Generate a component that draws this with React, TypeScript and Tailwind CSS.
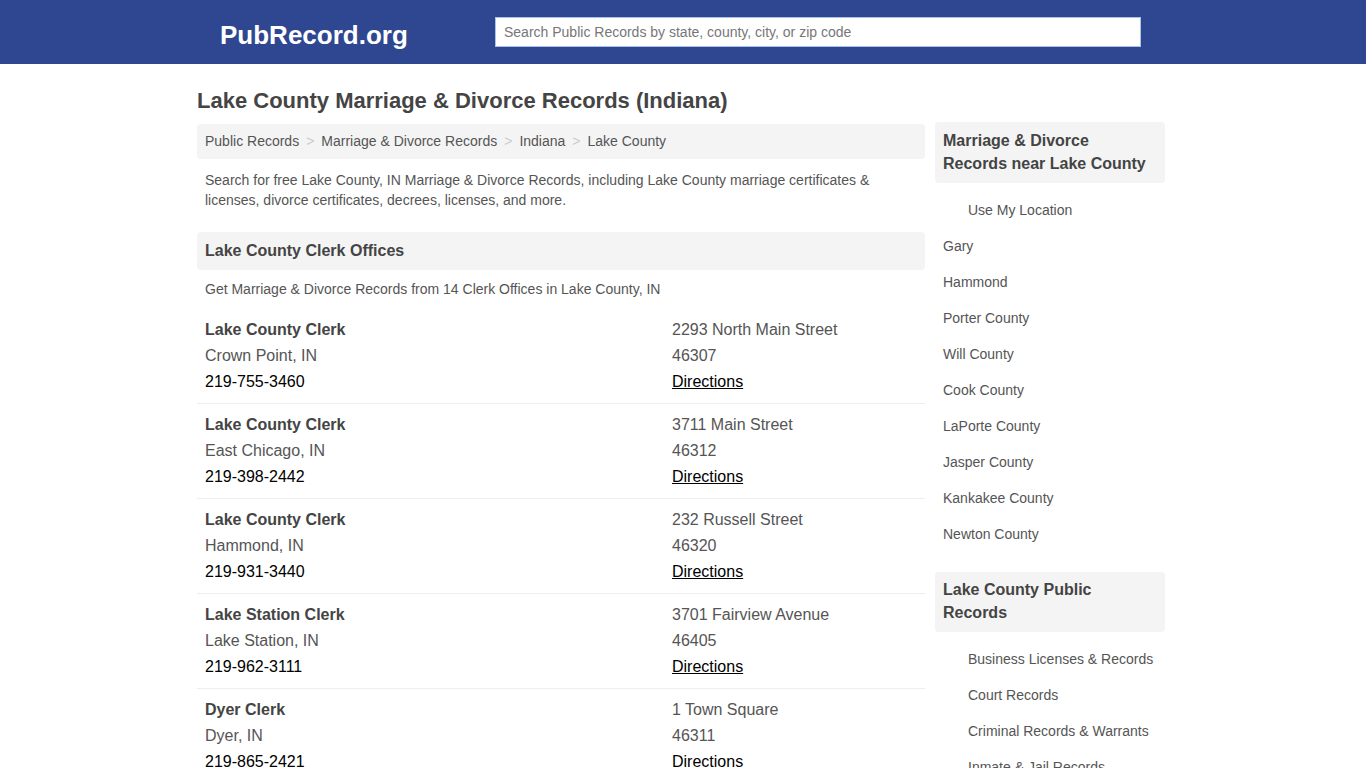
import React from "react";

const offices = [
  { name: "Lake County Clerk", city: "Crown Point, IN", phone: "219-755-3460", street: "2293 North Main Street", zip: "46307" },
  { name: "Lake County Clerk", city: "East Chicago, IN", phone: "219-398-2442", street: "3711 Main Street", zip: "46312" },
  { name: "Lake County Clerk", city: "Hammond, IN", phone: "219-931-3440", street: "232 Russell Street", zip: "46320" },
  { name: "Lake Station Clerk", city: "Lake Station, IN", phone: "219-962-3111", street: "3701 Fairview Avenue", zip: "46405" },
  { name: "Dyer Clerk", city: "Dyer, IN", phone: "219-865-2421", street: "1 Town Square", zip: "46311" },
];

const nearby = ["Gary", "Hammond", "Porter County", "Will County", "Cook County", "LaPorte County", "Jasper County", "Kankakee County", "Newton County"];

const publicRecords = ["Business Licenses & Records", "Court Records", "Criminal Records & Warrants", "Inmate & Jail Records"];

const crumbs = ["Public Records", "Marriage & Divorce Records", "Indiana", "Lake County"];

const App: React.FC = () => {
  return (
    <div className="min-h-screen bg-white text-[#555]" style={{ fontFamily: '"Liberation Sans", Arial, sans-serif' }}>
      {/* Header */}
      <div className="h-16 bg-[#2e4790]">
        <div className="mx-auto w-[972px] h-full flex items-center">
          <div className="ml-[23px] mt-[5px] w-[275px] text-white font-bold text-[26px] leading-none">PubRecord.org</div>
          <input
            className="w-[646px] h-[30px] bg-white border border-[#a9c4e8] px-2 text-[14px] text-[#555] placeholder:text-[#777] outline-none"
            placeholder="Search Public Records by state, county, city, or zip code"
          />
        </div>
      </div>

      <div className="mx-auto w-[972px] flex gap-[10px]">
        {/* Main */}
        <div className="w-[728px]">
          <h1 className="pt-[23px] pb-[9px] text-[22px] font-bold leading-[28px] text-[#444]">
            Lake County Marriage &amp; Divorce Records (Indiana)
          </h1>
          <div className="h-[35px] bg-[#f4f4f4] rounded px-2 flex items-center text-[14px] text-[#555]">
            {crumbs.map((c, i) => (
              <React.Fragment key={c}>
                {i > 0 && <span className="px-[7px] text-[#ccc]">&gt;</span>}
                <span>{c}</span>
              </React.Fragment>
            ))}
          </div>
          <p className="px-2 pt-[11px] text-[14px] leading-[20px] text-[#555]">
            Search for free Lake County, IN Marriage &amp; Divorce Records, including Lake County marriage certificates &amp; licenses, divorce certificates, decrees, licenses, and more.
          </p>
          <div className="mt-[22px] h-[38px] bg-[#f4f4f4] rounded px-2 flex items-center text-[16px] font-bold text-[#444]">
            Lake County Clerk Offices
          </div>
          <p className="px-2 pt-[9px] text-[14px] leading-[20px] text-[#555]">
            Get Marriage &amp; Divorce Records from 14 Clerk Offices in Lake County, IN
          </p>
          <div className="mt-[10px]">
            {offices.map((o, i) => (
              <div key={i} className="grid grid-cols-[467px_1fr] px-2 pt-[8px] pb-[8px] border-b border-[#eee] text-[16px] leading-[26px]">
                <div>
                  <div className="font-bold text-[#444]">{o.name}</div>
                  <div className="text-[#555]">{o.city}</div>
                  <div className="text-black">{o.phone}</div>
                </div>
                <div>
                  <div className="text-[#555]">{o.street}</div>
                  <div className="text-[#555]">{o.zip}</div>
                  <div className="text-black underline">Directions</div>
                </div>
              </div>
            ))}
          </div>
        </div>

        {/* Sidebar */}
        <div className="w-[230px] pt-[58px]">
          <div className="bg-[#f4f4f4] rounded px-2 pt-[7px] pb-[8px] text-[16px] font-bold leading-[23px] text-[#444]">
            Marriage &amp; Divorce Records near Lake County
          </div>
          <div className="pt-[9px] text-[14px] text-[#555]">
            <div className="h-[36px] flex items-center pl-[33px]">Use My Location</div>
            {nearby.map((n) => (
              <div key={n} className="h-[36px] flex items-center pl-2">{n}</div>
            ))}
          </div>
          <div className="mt-[20px] bg-[#f4f4f4] rounded px-2 pt-[6px] pb-[8px] text-[16px] font-bold leading-[23px] text-[#444]">
            Lake County Public Records
          </div>
          <div className="pt-[9px] text-[14px] text-[#555]">
            {publicRecords.map((n) => (
              <div key={n} className="h-[36px] flex items-center pl-[33px]">{n}</div>
            ))}
          </div>
        </div>
      </div>
    </div>
  );
};

export default App;
